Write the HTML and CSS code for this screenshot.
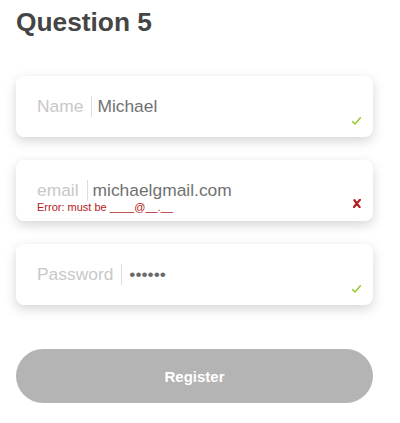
FILE: index.html
```html
<!DOCTYPE html>
<html lang="en">
<head>
<meta charset="utf-8">
<title>Question 5</title>
<link rel="stylesheet" href="styles.css">
</head>
<body>
<main class="form">
  <h1 class="title">Question 5</h1>

  <div class="field">
    <div class="row"><span class="label">Name</span><span class="value">Michael</span></div>
    <svg class="status status-ok" viewBox="0 0 9 8" width="9" height="8" aria-hidden="true"><path d="M0.4 4.6 L3 7 L8.6 0.4" fill="none" stroke="#9acd32" stroke-width="1.6" stroke-linecap="round" stroke-linejoin="round"/></svg>
  </div>

  <div class="field">
    <div class="row"><span class="label">email</span><span class="value">michaelgmail.com</span></div>
    <div class="error">Error: must be ____@__.__</div>
    <svg class="status status-bad" viewBox="0 0 8 9" width="8" height="9" aria-hidden="true"><path d="M1.4 1.2 C3 3.2 4.6 5.6 6.6 8.2 M7 0.8 C5 3 3 5.4 1 8" fill="none" stroke="#b22222" stroke-width="2.2" stroke-linecap="round"/></svg>
  </div>

  <div class="field field-last">
    <div class="row"><span class="label">Password</span><span class="value value-dots">••••••</span></div>
    <svg class="status status-ok" viewBox="0 0 9 8" width="9" height="8" aria-hidden="true"><path d="M0.4 4.6 L3 7 L8.6 0.4" fill="none" stroke="#9acd32" stroke-width="1.6" stroke-linecap="round" stroke-linejoin="round"/></svg>
  </div>

  <button class="register" type="button">Register</button>
</main>
</body>
</html>
```

FILE: styles.css
```css
body {
  margin: 0;
  background: #ffffff;
  font-family: "Liberation Sans", Arial, sans-serif;
}

.form {
  width: 357px;
  padding: 7px 0 0 16px;
}

.title {
  margin: 0 0 39px;
  font-size: 26.3px;
  line-height: 30px;
  font-weight: bold;
  color: #454545;
}

.field {
  position: relative;
  box-sizing: border-box;
  height: 61px;
  padding: 20px 0 0 21px;
  margin-bottom: 23px;
  background: #ffffff;
  border-radius: 8px;
  box-shadow: 0 4px 12px rgba(0, 0, 0, 0.17);
}

.field-last {
  margin-bottom: 44px;
}

.row {
  display: flex;
  font-size: 17.4px;
  line-height: 21px;
}

.label {
  color: #c8c8c8;
  padding-right: 8px;
  border-right: 1px solid #dddddd;
}

.value {
  color: #717171;
  padding-left: 5px;
}

.value-dots {
  padding-left: 7px;
  color: #6a6a6a;
}

.error {
  font-size: 11px;
  line-height: 13px;
  color: #b22222;
}

.status {
  position: absolute;
  display: block;
  right: 12px;
}

.status-ok {
  top: 41px;
}

.status-bad {
  top: 39px;
}

.register {
  display: block;
  width: 100%;
  height: 54px;
  border: 0;
  border-radius: 27px;
  background: #b4b4b4;
  color: #ffffff;
  font-family: "Liberation Sans", Arial, sans-serif;
  font-size: 15px;
  font-weight: bold;
  padding: 0;
}
```
